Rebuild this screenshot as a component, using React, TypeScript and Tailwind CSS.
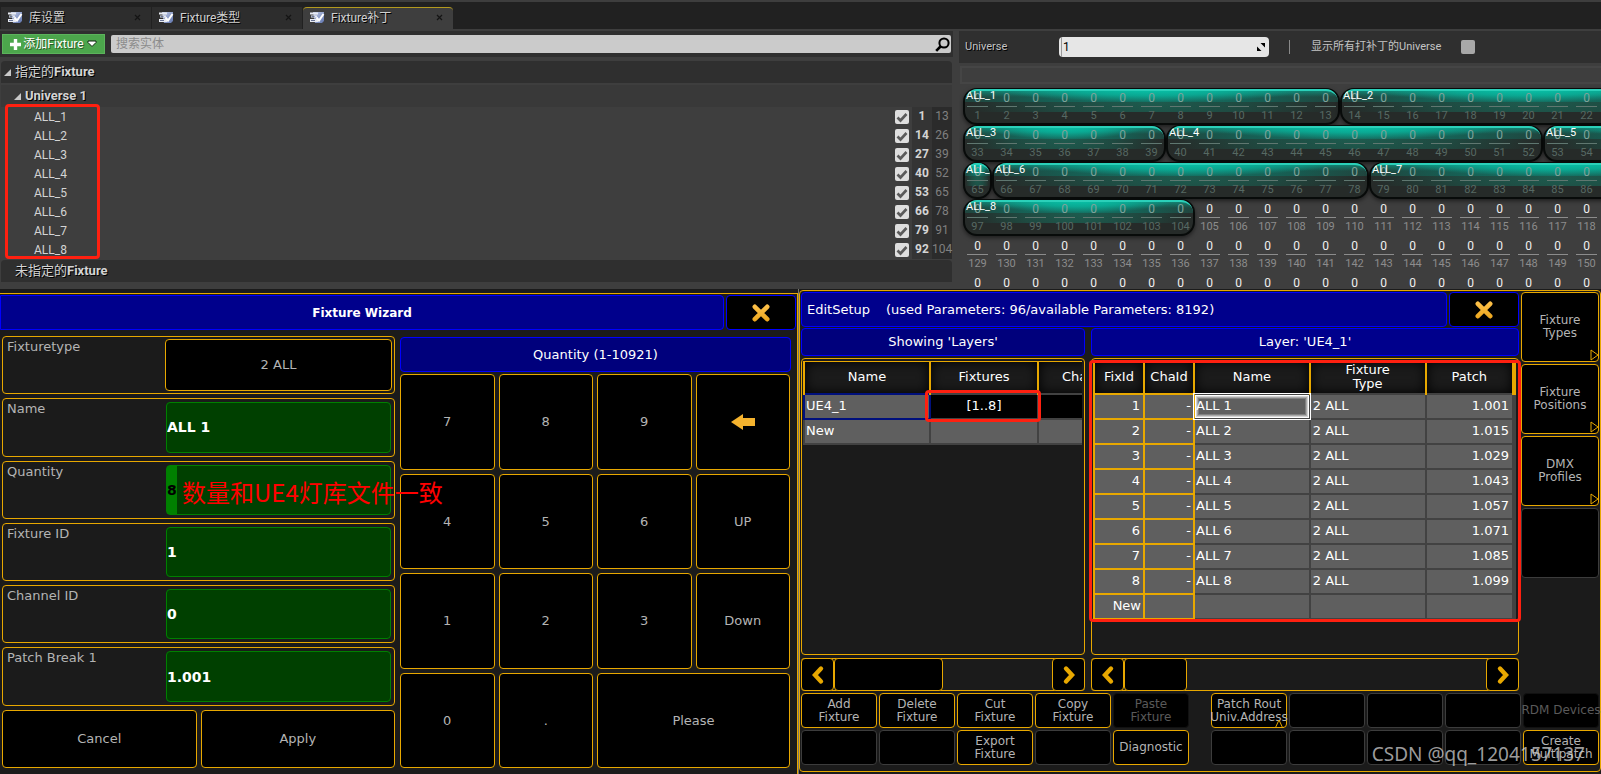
import React from 'react';
import clsx from 'clsx';

interface Fixture {
  name: string;
  start: number;
  end: number;
}

const fixtures: Fixture[] = [
  { name: 'ALL_1', start: 1, end: 13 },
  { name: 'ALL_2', start: 14, end: 26 },
  { name: 'ALL_3', start: 27, end: 39 },
  { name: 'ALL_4', start: 40, end: 52 },
  { name: 'ALL_5', start: 53, end: 65 },
  { name: 'ALL_6', start: 66, end: 78 },
  { name: 'ALL_7', start: 79, end: 91 },
  { name: 'ALL_8', start: 92, end: 104 },
];

const patches = ['1.001', '1.015', '1.029', '1.043', '1.057', '1.071', '1.085', '1.099'];

const CHANNELS_PER_ROW = 32;

interface Segment {
  name?: string;
  channels: number[];
}

// Splits one row of 32 channels into runs that belong to the same fixture
const buildRow = (row: number): Segment[] => {
  const segments: Segment[] = [];
  for (let i = 0; i < CHANNELS_PER_ROW; i++) {
    const channel = row * CHANNELS_PER_ROW + i + 1;
    const name = fixtures.find(f => channel >= f.start && channel <= f.end)?.name;
    const last = segments[segments.length - 1];
    if (last && last.name === name) {
      last.channels.push(channel);
    } else {
      segments.push({ name, channels: [channel] });
    }
  }
  return segments;
};

const TabIcon = () => (
  <svg className="w-4 h-4 shrink-0" viewBox="0 0 16 16">
    <defs>
      <linearGradient id="tabIconFill" x1="0" y1="0" x2="1" y2="1">
        <stop offset="0" stopColor="#c3cde6" />
        <stop offset="1" stopColor="#5f74ad" />
      </linearGradient>
    </defs>
    <path d="M4 2h11v9l-2 2H6z" fill="url(#tabIconFill)" />
    <path d="M1 2.5h8v2H1zM2 5.5h6v2H2zM1 9h8v3H1z" fill="#e8ebf2" />
    <path d="M2.5 6.5h3M2 10.5h4" stroke="#47557e" strokeWidth="0.8" />
    <path d="M7.5 7.5l2.500 3L14.500 4" fill="none" stroke="#fff" strokeWidth="2" />
  </svg>
);

const CrossIcon = () => (
  <svg className="w-[18px] h-[18px]" viewBox="0 0 18 18">
    <defs>
      <linearGradient id="crossFill" gradientUnits="userSpaceOnUse" x1="0" y1="0" x2="0" y2="18">
        <stop offset="0" stopColor="#ffc34d" />
        <stop offset="1" stopColor="#eba51c" />
      </linearGradient>
    </defs>
    <path d="M2.8 2.8l12.4 12.4M15.2 2.8L2.8 15.2" stroke="url(#crossFill)" strokeWidth="4.6" strokeLinecap="round" />
  </svg>
);

const ChevronIcon = ({ right }: { right?: boolean }) => (
  <svg className="w-[14px] h-[20px]" viewBox="0 0 14 20">
    <path
      d={right ? 'M4 3.5l6 6.5-6 6.5' : 'M10 3.5L4 10l6 6.5'}
      fill="none"
      stroke="#e8a800"
      strokeWidth="4.4"
      strokeLinecap="round"
    />
  </svg>
);

const TreeArrow = () => (
  <svg className="w-[7px] h-[7px] shrink-0" viewBox="0 0 7 7">
    <path d="M7 0v7H0z" fill="#c8c8c8" />
  </svg>
);

/* ---------- Unreal library editor ---------- */

const tabs = ['库设置', 'Fixture类型', 'Fixture补丁'];

const TabBar = () => (
  <div className="flex gap-px bg-[#212121] pt-[5px] pl-px border-t-2 border-b-2 border-[#3e3e3e]">
    {tabs.map((tab, i) => (
      <button
        key={tab}
        className={clsx(
          'flex items-center w-[150px] h-[22px] px-1.5 pb-0.5 border-t text-xs text-[#d0d0d0] [text-shadow:1px_1px_0_#000]',
          i === tabs.length - 1 ? 'bg-[#3e3e3e] border-[#b39a1e] rounded-t-sm' : 'bg-[#2d2d2d] border-[#2d2d2d]',
        )}
      >
        <TabIcon />
        <span className="ml-1.5">{tab}</span>
        <svg className="ml-auto mr-1 w-[7px] h-[7px]" viewBox="0 0 7 7">
          <path d="M1 1l5 5M6 1L1 6" stroke="#141414" strokeWidth="1.2" />
        </svg>
      </button>
    ))}
  </div>
);

const FixtureTree = () => (
  <section className="text-[#d4d4d4] pb-[7px]">
    <div className="flex items-center gap-1.5 h-[26px] bg-[#2f2f2f] px-0.5 mr-1.5">
      <button className="flex items-center justify-center h-5 w-[103px] bg-[#4ca64c] border border-[#5cb35c] text-xs text-white [text-shadow:1px_1px_0_#2a5c2a]">
        <svg className="w-[11px] h-[11px] mr-0.5" viewBox="0 0 11 11">
          <path d="M5.500 0v11M0 5.500h11" stroke="#fff" strokeWidth="3.400" />
        </svg>
        添加Fixture
        <svg className="w-[10px] h-2 ml-[3px]" viewBox="0 0 10 8">
          <path d="M1 1h8v1.500L5 6.500 1 2.500z" fill="#fff" stroke="#0c250c" strokeWidth="1" />
        </svg>
      </button>
      <div className="flex flex-1 items-center h-[18px] bg-[#cbcbcb] rounded-xs pl-[5px] pr-px">
        <input
          aria-label="搜索实体"
          placeholder="搜索实体"
          className="flex-1 min-w-0 bg-transparent text-xs leading-4 text-black placeholder:text-[#8c8c8c] outline-none"
        />
        <svg className="w-[15px] h-[15px]" viewBox="0 0 15 15">
          <circle cx="9" cy="6" r="4.600" fill="none" stroke="#000" strokeWidth="2" />
          <path d="M5.500 9.500L1.200 13.800" stroke="#000" strokeWidth="2.600" />
        </svg>
      </div>
    </div>

    <div className="mt-1 ml-px mr-[7px]">
      <div className="flex items-center gap-1 h-[22px] pl-[3px] bg-[#2f2f2f] text-[13px] font-bold [text-shadow:1px_1px_0_#000] rounded-t-sm">
        <TreeArrow />
        <h2><span className="font-normal">指定的</span>Fixture</h2>
      </div>
      <div className="flex items-center gap-1 mt-0.5 h-[22px] pl-[13px] bg-[#393939] text-[13px] font-bold [text-shadow:1px_1px_0_#000]">
        <TreeArrow />
        <h3>Universe 1</h3>
      </div>
      <div className="relative">
        {fixtures.map(fixture => (
          <div key={fixture.name} className="flex items-center h-[19px] text-xs">
            <span className="flex-1 pl-[33px]">{fixture.name}</span>
            <label className="grid mr-[3px]">
              <input
                type="checkbox"
                defaultChecked
                aria-label={fixture.name}
                className="appearance-none [grid-area:1/1] size-3.5 bg-[#dedede] rounded-xs peer"
              />
              <svg className="[grid-area:1/1] size-3.5 hidden peer-checked:block pointer-events-none" viewBox="0 0 14 14">
                <path d="M2.500 7.500l3 3L11.500 4" fill="none" stroke="#5a5a5a" strokeWidth="2.600" />
              </svg>
            </label>
            <span className="w-5 h-full bg-[#343434] text-center font-bold leading-[19px]">{fixture.start}</span>
            <span className="w-5 h-full bg-[#2b2b2b] text-center leading-[19px] text-[#808080]">{fixture.end}</span>
          </div>
        ))}
        <div className="absolute left-1 -top-[3px] bottom-0 w-[95px] border-[3px] border-[#ff2010] rounded" />
      </div>
      <div className="flex items-center mt-px h-[22px] pl-3.5 bg-[#2f2f2f] text-[13px] font-bold [text-shadow:1px_1px_0_#000] rounded-t-sm">
        <h2><span className="font-normal">未指定的</span>Fixture</h2>
      </div>
    </div>
  </section>
);

const ChannelCells = ({ channels, patched }: { channels: number[]; patched: boolean }) => (
  <div className="flex">
    {channels.map(channel => (
      <div
        key={channel}
        className={clsx('w-[29px] h-[37px] pt-1 px-1 text-center text-[11px]', patched ? 'text-[#7fa39b]' : 'text-[#f0f0f0]')}
      >
        <div className="h-[14px] leading-[13px] text-xs">0</div>
        <div className={clsx('border-t leading-[17px]', patched ? 'border-[#5f7770] text-[#566963]' : 'border-[#8c8c8c] text-[#8c8c8c]')}>
          {channel}
        </div>
      </div>
    ))}
  </div>
);

const UniverseMonitor = () => (
  <section className="h-0 min-h-full overflow-hidden text-[11px] text-[#c4c4c4]">
    <div className="flex items-center h-8 bg-[#2f2f2f] pl-1.5">
      <label htmlFor="universe" className="w-[94px] [text-shadow:1px_1px_0_#000]">Universe</label>
      <div className="flex items-center w-[210px] h-5 pl-0.5 pr-1 bg-[#e6e6e6] rounded-sm">
        <input
          id="universe"
          defaultValue="1"
          className="flex-1 min-w-0 pl-px border-l border-[#9a9a9a] bg-transparent text-xs leading-5 text-black outline-none"
        />
        <svg className="w-2 h-2" viewBox="0 0 8 8">
          <path d="M3.500 0H8v4.500zM0 3.500V8h4.500z" fill="#000" />
        </svg>
      </div>
      <div className="w-px h-3.5 ml-5 bg-[#8a8a8a]" />
      <label className="flex items-center gap-5 ml-[21px]">
        显示所有打补丁的Universe
        <input type="checkbox" className="appearance-none size-3.5 bg-[#a8a8a8] rounded-xs" />
      </label>
    </div>
    <div className="mt-[3px] ml-px h-[18px] border-2 border-r-0 border-[#454545]" />
    <div className="pt-1 pl-1">
      {[0, 1, 2, 3, 4, 5].map(row => (
        <div key={row} className="flex w-max">
          {buildRow(row).map(segment =>
            segment.name ? (
              <div
                key={segment.channels[0]}
                className="relative overflow-hidden h-[37px] rounded-[14px] border-x-2 border-t border-b-2 border-[#080b0a] shadow-[0_2px_4px_rgba(0,0,0,0.5)] bg-[#262b29]"
              >
                <div className="absolute inset-x-0 top-0 h-[23px] bg-[radial-gradient(ellipse_50%_200%_at_50%_50%,#1d5c4f_0%,#1f4a41_50%,rgba(38,43,41,0)_100%)]" />
                <div className="absolute inset-x-0 top-0 h-[13px] bg-[radial-gradient(ellipse_55%_250%_at_50%_50%,#14796a_0%,#175d52_55%,#22403a_100%)]" />
                <div className="absolute inset-x-0 top-0 h-2 bg-[linear-gradient(#10917f,rgba(20,110,95,0))]" />
                <div className="absolute inset-x-0 top-0 h-[13px] bg-[radial-gradient(ellipse_42%_100%_at_50%_0%,#08c4aa_0%,rgba(8,180,156,0.800)_50%,rgba(20,120,105,0)_100%)]" />
                <div className="absolute inset-0 rounded-[12px] border-t-2 border-[#2bd0b9]" />
                <div className="relative -mx-0.5 -mt-px">
                  <ChannelCells channels={segment.channels} patched />
                </div>
                <span className="absolute left-px top-0 leading-[14px] text-[11px] text-white">{segment.name}</span>
              </div>
            ) : (
              <ChannelCells key={segment.channels[0]} channels={segment.channels} patched={false} />
            ),
          )}
        </div>
      ))}
    </div>
  </section>
);

/* ---------- Console: fixture wizard ---------- */

const wizardFields = [
  { id: 'name', label: 'Name', value: 'ALL 1' },
  { id: 'quantity', label: 'Quantity', value: '8' },
  { id: 'fixture-id', label: 'Fixture ID', value: '1' },
  { id: 'channel-id', label: 'Channel ID', value: '0' },
  { id: 'patch-break', label: 'Patch Break 1', value: '1.001' },
];

const keys = ['7', '8', '9', 'back', '4', '5', '6', 'UP', '1', '2', '3', 'Down', '0', '.', 'Please'];

const FixtureWizard = () => (
  <section className="flex flex-col pt-1">
    <div className="flex flex-col flex-1 border-t border-r border-[#e8a800] pt-px">
      <div className="flex gap-0.5 h-[35px] pr-px">
        <h2 className="flex flex-1 items-center justify-center bg-[#00008c] border border-[#0000ff] rounded-r text-xs font-bold text-white">
          Fixture Wizard
        </h2>
        <button aria-label="Close" className="flex items-center justify-center w-[70px] bg-black border border-[#0000ff] rounded">
          <CrossIcon />
        </button>
      </div>

      <div className="grid flex-1 grid-cols-[393fr_391fr] gap-[5px] pt-1.5 pl-0.5 pr-1.5 pb-1.5">
        <form className="relative grid auto-rows-fr gap-1 text-[13px] text-[#b4b4b4]">
          <div className="flex border border-[#e8a800] rounded p-0.5">
            <span className="w-[160px] pl-0.5 leading-4">Fixturetype</span>
            <button type="button" className="flex-1 bg-black border border-[#e8a800] rounded">2 ALL</button>
          </div>
          {wizardFields.map(field => (
            <div key={field.id} className="flex border border-[#e8a800] rounded p-[3px]">
              <label htmlFor={field.id} className="w-[160px] pl-px leading-[14px]">{field.label}</label>
              <input
                id={field.id}
                defaultValue={field.value}
                className={clsx(
                  'flex-1 min-w-0 border border-[#008000] rounded text-sm font-bold outline-none',
                  field.id === 'quantity'
                    ? 'bg-[linear-gradient(90deg,#008000_10px,#004000_10px)] text-black'
                    : 'bg-[#004000] text-white',
                )}
              />
            </div>
          ))}
          <div className="grid grid-cols-2 gap-1">
            <button type="button" className="bg-black border border-[#e8a800] rounded">Cancel</button>
            <button type="button" className="bg-black border border-[#e8a800] rounded">Apply</button>
          </div>
          <p className="absolute left-[180px] top-[140px] z-10 whitespace-nowrap text-2xl text-[#ff0000] font-['Noto_Sans_CJK_SC',sans-serif]">
            数量和UE4灯库文件一致
          </p>
        </form>

        <div className="flex flex-col gap-0.5 pt-px text-[13px] text-[#b4b4b4]">
          <h3 className="flex items-center justify-center h-[35px] bg-[#00007c] border border-[#0000ff] rounded text-white">
            Quantity (1-10921)
          </h3>
          <div className="grid flex-1 grid-cols-4 auto-rows-fr gap-1 pr-px">
            {keys.map(key => (
              <button
                key={key}
                aria-label={key}
                className={clsx(
                  'flex items-center justify-center bg-black border border-[#e8a800] rounded',
                  key === 'Please' && 'col-span-2',
                )}
              >
                {key === 'back' ? (
                  <svg className="w-6 h-4" viewBox="0 0 24 16">
                    <path d="M0 8L12 0v4h12v8H12v4z" fill="#f5b32e" />
                  </svg>
                ) : (
                  key
                )}
              </button>
            ))}
          </div>
        </div>
      </div>
    </div>
  </section>
);

/* ---------- Console: edit setup ---------- */

const sideButtons = [['Fixture', 'Types'], ['Fixture', 'Positions'], ['DMX', 'Profiles']];

const ScrollBar = ({ thumb }: { thumb: string }) => (
  <div className="flex h-[33px] border-y border-[#e8a800] rounded">
    <button aria-label="Scroll left" className="flex items-center justify-center w-[33px] -my-px bg-black border border-[#e8a800] rounded">
      <ChevronIcon />
    </button>
    <div className={clsx('-my-px bg-black border border-[#e8a800] rounded', thumb)} />
    <button aria-label="Scroll right" className="flex items-center justify-center w-[33px] -my-px ml-auto bg-black border border-[#e8a800] rounded">
      <ChevronIcon right />
    </button>
  </div>
);

type ActionState = 'on' | 'off' | 'empty';

interface Action {
  lines: string[];
  state: ActionState;
  popup?: boolean;
}

const empty: Action = { lines: [], state: 'empty' };

const actionRows: Action[][] = [
  [
    { lines: ['Add', 'Fixture'], state: 'on' },
    { lines: ['Delete', 'Fixture'], state: 'on' },
    { lines: ['Cut', 'Fixture'], state: 'on' },
    { lines: ['Copy', 'Fixture'], state: 'on' },
    { lines: ['Paste', 'Fixture'], state: 'off' },
    { lines: ['Patch Rout', 'Univ.Address'], state: 'on', popup: true },
    empty,
    empty,
    empty,
    { lines: ['RDM Devices'], state: 'off' },
  ],
  [
    empty,
    empty,
    { lines: ['Export', 'Fixture'], state: 'on' },
    empty,
    { lines: ['Diagnostic'], state: 'on' },
    empty,
    empty,
    empty,
    empty,
    { lines: ['Create', 'Multipatch'], state: 'on' },
  ],
];

const ActionButton = ({ action, spaced }: { action: Action; spaced: boolean }) => (
  <button
    disabled={action.state !== 'on'}
    className={clsx(
      'relative flex flex-1 basis-0 min-w-0 flex-col items-center justify-center h-[35px] bg-black border rounded text-xs leading-[13px] whitespace-nowrap',
      action.state === 'on' && 'border-[#e8a800] text-[#b4b4b4]',
      action.state === 'off' && 'border-[#111111] text-[#5a5a5a]',
      action.state === 'empty' && 'border-[#3c3c3c]',
      spaced && 'ml-5',
    )}
  >
    {action.lines.map(line => (
      <span key={line}>{line}</span>
    ))}
    {action.popup && (
      <svg className="absolute right-0.5 bottom-[-1px] w-[10px] h-[9px]" viewBox="0 0 10 9">
        <path d="M0 8.500h1.500L5 1l3.500 7.500H10" fill="none" stroke="#e8a800" />
      </svg>
    )}
  </button>
);

const LayerTable = () => (
  <table className="w-[342px] table-fixed border-collapse text-[13px] text-white">
    <colgroup>
      <col className="w-[126px]" />
      <col className="w-[108px]" />
      <col className="w-[108px]" />
    </colgroup>
    <thead>
      <tr className="h-8">
        {['Name', 'Fixtures', 'Channels'].map(title => (
          <th key={title} className="border-2 border-t border-b border-[#e8a800] bg-[#1b1b1b] shadow-[inset_0_0_12px_#000] font-normal leading-[14px] p-0">
            {title}
          </th>
        ))}
      </tr>
    </thead>
    <tbody>
      <tr className="h-[25px]">
        <td className="border-2 border-[#00107c] bg-[#5f5f5f] p-0 pl-px leading-4">UE4_1</td>
        <td className="border-2 border-[#424242] bg-black p-0 text-center leading-4">[1..8]</td>
        <td className="border-2 border-[#424242] bg-black p-0" />
      </tr>
      <tr className="h-[25px]">
        <td className="border-2 border-[#424242] bg-[#5f5f5f] p-0 pl-px leading-4">New</td>
        <td className="border-2 border-[#424242] bg-[#5f5f5f] p-0" />
        <td className="border-2 border-[#424242] bg-[#5f5f5f] p-0" />
      </tr>
    </tbody>
  </table>
);

const idCell = 'border-2 border-[#e8a800] bg-[#5f5f5f] p-0 text-right leading-4';
const dataCell = 'border-2 border-[#424242] bg-[#5f5f5f] p-0 leading-4';

const PatchTable = () => (
  <table className="w-full table-fixed border-collapse text-[13px] text-white">
    <colgroup>
      <col className="w-[50px]" />
      <col className="w-[50px]" />
      <col className="w-[27.500%]" />
      <col className="w-[27.500%]" />
      <col />
      <col className="w-0.5" />
    </colgroup>
    <thead>
      <tr className="h-8">
        {['FixId', 'ChaId', 'Name', 'Fixture Type', 'Patch', ''].map(title => (
          <th
            key={title}
            className="border-2 border-t border-b border-[#e8a800] bg-[#1b1b1b] shadow-[inset_0_0_12px_#000] font-normal leading-[14px] p-0"
          >
            {title === 'Fixture Type' ? <>Fixture<br />Type</> : title}
          </th>
        ))}
      </tr>
    </thead>
    <tbody>
      {patches.map((patch, i) => (
        <tr key={patch} className="h-[25px]">
          <td className={clsx(idCell, 'pr-[3px]')}>{i + 1}</td>
          <td className={clsx(idCell, 'pr-0.5')}>-</td>
          <td
            className={clsx(
              dataCell,
              'pl-px',
              i === 0 && 'shadow-[inset_0_0_0_1px_#fff,inset_0_0_0_2px_#d0d0d0,inset_0_0_0_3px_#a8a8a8,inset_0_0_0_4px_#808080] outline-1 outline-white',
            )}
          >
            ALL {i + 1}
          </td>
          <td className={clsx(dataCell, 'pl-0.5')}>2 ALL</td>
          <td className={clsx(dataCell, 'pr-[3px] text-right')}>{patch}</td>
          <td className={dataCell} />
        </tr>
      ))}
      <tr className="h-[25px]">
        <td className={clsx(idCell, 'pr-0.5')}>New</td>
        <td className={idCell} />
        <td className={dataCell} />
        <td className={dataCell} />
        <td className={dataCell} />
        <td className={dataCell} />
      </tr>
    </tbody>
  </table>
);

const EditSetup = () => (
  <section className="flex flex-col pt-px pb-0.5 border-l border-[#77776c]">
    <div className="flex flex-col flex-1 gap-0.5 border border-[#e8a800] rounded pt-px px-px pb-1.5">
      <div className="flex flex-1 gap-0.5">
        <div className="flex flex-1 min-w-0 flex-col">
          <div className="flex gap-0.5 h-[35px]">
            <h2 className="flex flex-1 items-center gap-4 pl-[5px] bg-[#00008c] border border-[#0000ff] rounded text-[13px] text-white">
              <span>EditSetup</span>
              <span>(used Parameters: 96/available Parameters: 8192)</span>
            </h2>
            <button aria-label="Close" className="flex items-center justify-center w-[70px] bg-black border border-[#0000ff] rounded">
              <CrossIcon />
            </button>
          </div>

          <div className="grid flex-1 grid-cols-[minmax(0,284fr)_minmax(0,428fr)] grid-rows-[28px_1fr_33px] gap-x-1.5 mt-px">
            <h3 className="flex items-center justify-center bg-[#00007c] border border-[#0000ff] rounded text-[13px] text-white">
              Showing 'Layers'
            </h3>
            <h3 className="flex items-center justify-center bg-[#00008c] border border-[#0000ff] rounded text-[13px] text-white">
              Layer: 'UE4_1'
            </h3>
            <div className="relative mt-0.5 mb-[3px] py-0.5 pl-px pr-0.5 border border-[#e8a800] rounded">
              <div className="overflow-hidden">
                <LayerTable />
              </div>
              <div className="absolute left-[123px] top-[31px] w-[116px] h-8 border-[3px] border-[#ff2010] rounded-sm" />
            </div>
            <div className="relative mt-0.5 mb-[3px] py-0.5 pl-px pr-0.5 border border-[#e8a800] rounded">
              <PatchTable />
              <div className="absolute -left-[3px] -right-[3px] top-px h-[262px] border-[3px] border-[#ff2010] rounded-sm" />
            </div>
            <ScrollBar thumb="w-[109px]" />
            <ScrollBar thumb="w-[63px]" />
          </div>
        </div>

        <div className="flex flex-col gap-0.5 w-[78px] text-xs leading-[13px] text-[#b4b4b4]">
          {sideButtons.map(([first, second]) => (
            <button key={second} className="relative flex flex-col items-center justify-center h-[70px] bg-black border border-[#e8a800] rounded">
              <span>{first}</span>
              <span>{second}</span>
              <svg className="absolute right-[-1px] bottom-0 w-[9px] h-3" viewBox="0 0 9 12">
                <path d="M1 1l7 5-7 5z" fill="none" stroke="#e8a800" />
              </svg>
            </button>
          ))}
          <button disabled aria-label="Empty" className="h-[70px] bg-black border border-[#3c3c3c] rounded" />
        </div>
      </div>

      {actionRows.map((row, i) => (
        <div key={i} className="flex gap-0.5">
          {row.map((action, j) => (
            <ActionButton key={j} action={action} spaced={j === 5} />
          ))}
        </div>
      ))}
    </div>
  </section>
);

const App: React.FC = () => (
  <div className="relative flex flex-col min-h-screen bg-[#1b1b1b]">
    <header className="bg-[#3e3e3e] font-['Roboto','Noto_Sans_CJK_SC',sans-serif]">
      <TabBar />
      <div className="grid grid-cols-[minmax(0,959fr)_minmax(0,642fr)]">
        <FixtureTree />
        <UniverseMonitor />
      </div>
    </header>
    <main className="grid flex-1 grid-cols-[minmax(0,798fr)_minmax(0,803fr)] font-['DejaVu_Sans',sans-serif]">
      <FixtureWizard />
      <EditSetup />
    </main>
    <p className="absolute right-4 bottom-1.5 text-[19px] leading-7 text-[#d0d0d0]/75 font-['Noto_Sans',sans-serif]">
      CSDN @qq_1204157137
    </p>
  </div>
);

export default App;
